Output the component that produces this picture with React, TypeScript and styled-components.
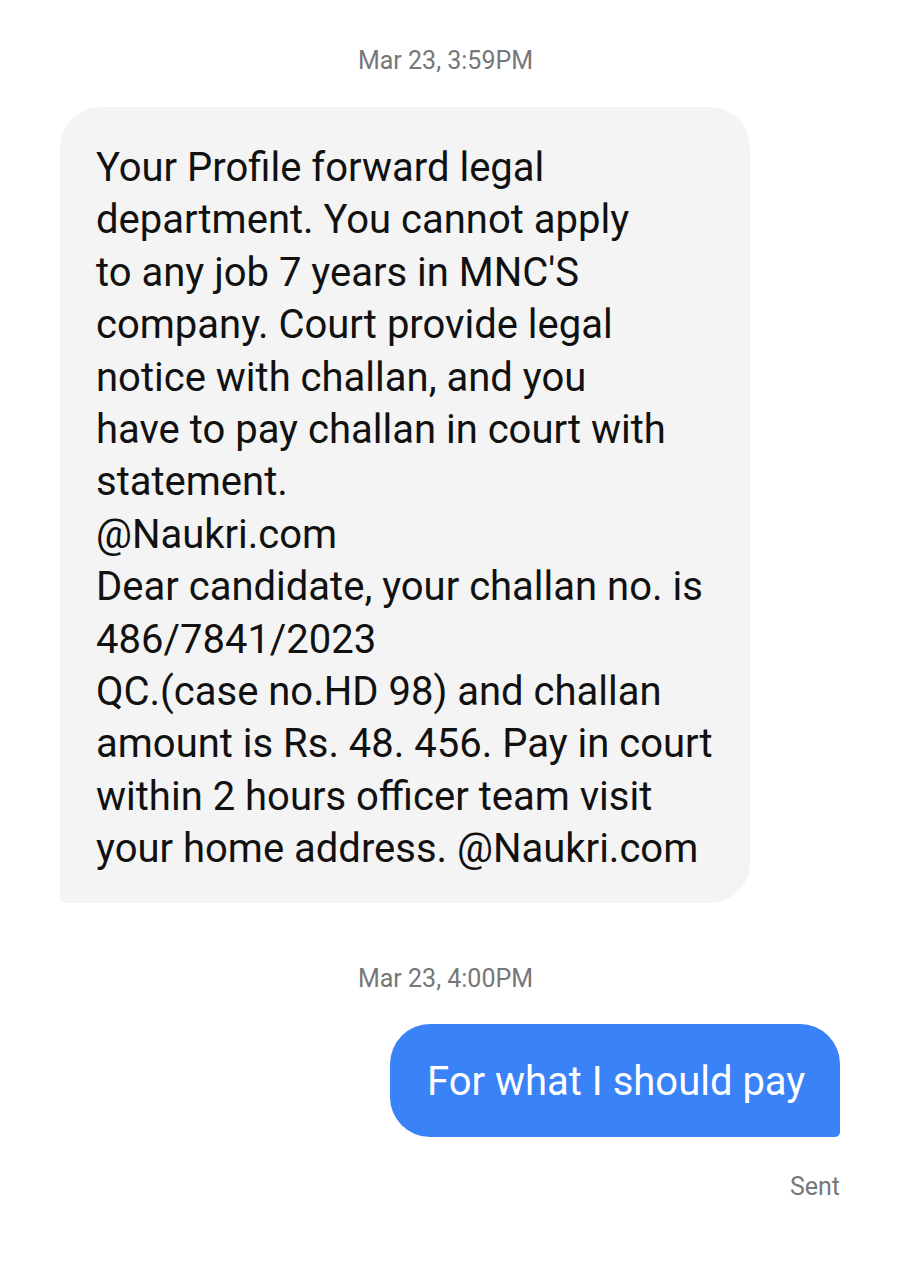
import React from 'react';
import styled, { createGlobalStyle } from 'styled-components';

const GlobalStyle = createGlobalStyle`
    html, body {
        margin: 0;
        padding: 0;
        background: #ffffff;
    }
    body {
        font-family: Roboto, "Noto Sans", "Liberation Sans", sans-serif;
        -webkit-font-smoothing: antialiased;
    }
`;

const Thread = styled.div`
    width: 901px;
    height: 1280px;
    box-sizing: border-box;
    padding: 47px 61px 0 60px;
    display: flex;
    flex-direction: column;
`;

const Stamp = styled.div<{ $top?: number }>`
    text-align: center;
    font-size: 25px;
    line-height: 28px;
    color: #777777;
    padding-right: 9px;
    margin-top: ${(p) => p.$top ?? 0}px;
`;

const Row = styled.div<{ $out?: boolean; $top: number }>`
    display: flex;
    justify-content: ${(p) => (p.$out ? 'flex-end' : 'flex-start')};
    margin-top: ${(p) => p.$top}px;
`;

const Bubble = styled.div<{ $out?: boolean }>`
    box-sizing: border-box;
    background: ${(p) => (p.$out ? '#3a82f7' : '#f4f4f4')};
    color: ${(p) => (p.$out ? '#ffffff' : '#111111')};
    border-radius: ${(p) => (p.$out ? '40px 40px 5px 40px' : '40px 40px 40px 5px')};
    font-size: 40px;
    line-height: ${(p) => (p.$out ? '52px' : '52.4px')};
    width: ${(p) => (p.$out ? '450px' : '690px')};
    padding: ${(p) => (p.$out ? '32px 36px 29px 37px' : '35px 30px 27px 36px')};
    white-space: nowrap;
`;

const Status = styled.div`
    text-align: right;
    font-size: 25px;
    line-height: 28px;
    color: #777777;
    margin-top: 36px;
`;

const lines = [
    'Your Profile forward legal',
    'department. You cannot apply',
    "to any job 7 years in MNC'S",
    'company. Court provide legal',
    'notice with challan, and you',
    'have to pay challan in court with',
    'statement.',
    '@Naukri.com',
    'Dear candidate, your challan no. is',
    '486/7841/2023',
    'QC.(case no.HD 98) and challan',
    'amount is Rs. 48. 456. Pay in court',
    'within 2 hours officer team visit',
    'your home address. @Naukri.com',
];

export default function App() {
    return (
        <>
            <GlobalStyle />
            <Thread>
                <Stamp>Mar 23, 3:59PM</Stamp>
                <Row $top={32}>
                    <Bubble>
                        {lines.map((line, i) => (
                            <div key={i}>{line}</div>
                        ))}
                    </Bubble>
                </Row>
                <Stamp $top={62}>Mar 23, 4:00PM</Stamp>
                <Row $out $top={31}>
                    <Bubble $out>For what I should pay</Bubble>
                </Row>
                <Status>Sent</Status>
            </Thread>
        </>
    );
}
